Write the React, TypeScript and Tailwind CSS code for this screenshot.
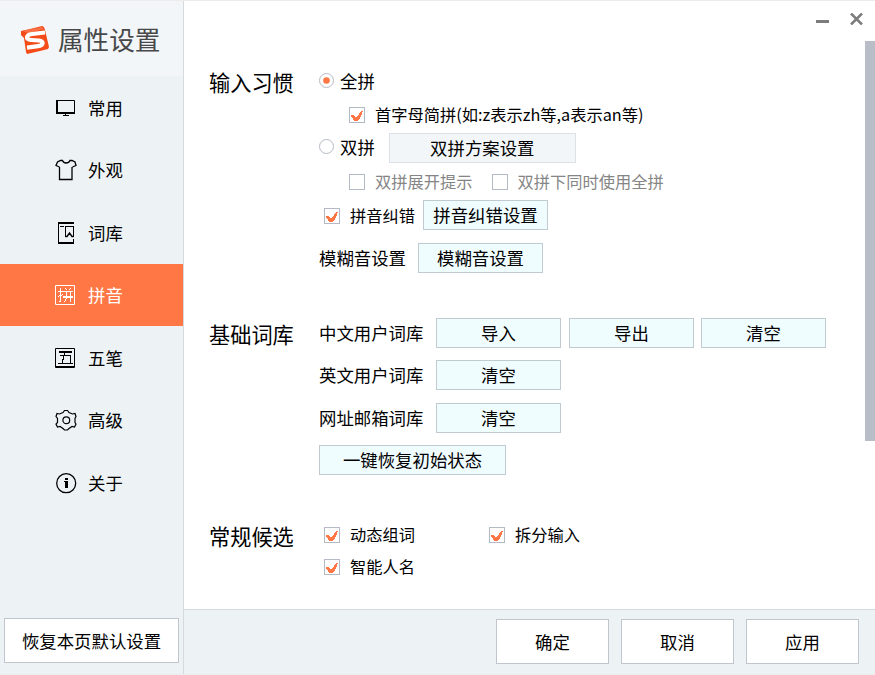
import type { ReactNode } from "react";

function CheckBox({ checked = false }: { checked?: boolean }) {
  return (
    <svg width="16" height="16" viewBox="0 0 16 16" className="mr-px mt-px shrink-0" shapeRendering="crispEdges">
      <rect x="0.5" y="0.5" width="15" height="15" fill="#fff" stroke="#b4bac5" />
      {checked && (
        <path d="M2 8h3v1h1v1h2V9h1V8h1V6h1V5h1V4h2v1h-1v3h-1v2h-1v2h-1v1H9v1H5v-1H4v-2H3v-1H2z" fill="#ff7744" />
      )}
    </svg>
  );
}

function Radio({ checked = false, className = "" }: { checked?: boolean; className?: string }) {
  return (
    <svg width="15" height="15" viewBox="0 0 15 15" className={`shrink-0 ${className}`}>
      <circle cx="7.5" cy="7.5" r="7" fill="#fff" stroke="#b4bac5" />
      {checked && <circle cx="7.5" cy="7.5" r="3.3" fill="#ff7744" />}
    </svg>
  );
}

function Button({ children, className = "" }: { children: ReactNode; className?: string }) {
  return (
    <button
      className={`flex h-[30px] shrink-0 items-center justify-center border border-[#c0cad0] bg-[#f0fdff] text-[17.4px] leading-[30px] ${className}`}
    >
      {children}
    </button>
  );
}

function DialogButton({ children, className = "w-[113px]" }: { children: ReactNode; className?: string }) {
  return (
    <button
      className={`flex h-[45px] shrink-0 items-center justify-center border border-[#c1c6ce] bg-white text-[17.4px] leading-none ${className}`}
    >
      {children}
    </button>
  );
}

function Check({ label, checked, disabled, className = "" }: { label: string; checked?: boolean; disabled?: boolean; className?: string }) {
  return (
    <label className={`flex items-center text-[16.25px] ${disabled ? "text-[#858585]" : ""} ${className}`}>
      <CheckBox checked={checked} />
      <span className="ml-[9px]">{label}</span>
    </label>
  );
}

function Row({ children, className = "" }: { children: ReactNode; className?: string }) {
  return <div className={`flex h-[30px] items-center whitespace-nowrap text-[17.4px] leading-[30px] ${className}`}>{children}</div>;
}

function Section({ title, children, className = "", titleClass = "" }: { title: string; children: ReactNode; className?: string; titleClass?: string }) {
  return (
    <section className={`flex ${className}`}>
      <h2 className={`w-[110px] shrink-0 text-[21.2px] leading-[32px] ${titleClass}`}>{title}</h2>
      <div>{children}</div>
    </section>
  );
}

const icons = {
  monitor: (
    <>
      <path d="M1.500 3.500h18v12h-18z" fill="none" stroke="currentColor" />
      <path d="M1 3h2v13H1zM1 15h19v2H1zM10 17h1v2h-1zM8 18h6v1H8z" fill="currentColor" />
    </>
  ),
  shirt: (
    <path
      d="M4.500 8v12.500h12.500V8M17 8v12M4.500 8L1 6.500 2.500 3l3-1.500h2C8.500 4 10 4 11 4s3 0 4-2.500h2l3 1.500 1 3.500-3.500 1.500"
      fill="none" stroke="currentColor" strokeWidth="1.300"
    />
  ),
  book: (
    <>
      <path d="M3 0h16v2H3zM3 0h1v21H3zM3 20h16v2H3zM18 17h1v4h-1zM5 4h4v1H5zM10 4h9v1h-9zM10 4h1v11h-1zM18 4h1v11h-1z" fill="currentColor" />
      <path d="M10.500 14.500h1.500l2.500-3.500 2.500 3.500h1.500" fill="none" stroke="currentColor" strokeWidth="1.400" />
    </>
  ),
  pinyin: (
    <>
      <path d="M.5 1.500h19v19H.5z" fill="none" stroke="currentColor" />
      <path d="M3 7h5v1H3zM5 4h1v14H5zM4 17h1v1H4zM3 12h1v1H3zM4 11h3v1H4zM7 10h1v1H7zM8 7h10v1H8zM8 12h10v2H8zM11 7h1v8h-1zM10 15h1v2h-1zM9 17h1v1H9zM15 7h1v11h-1zM10 4h1v1h-1zM11 5h1v1h-1zM15 4h1v1h-1zM14 5h1v1h-1z" fill="currentColor" />
    </>
  ),
  wubi: (
    <>
      <path d="M.5 1.500h19v19H.5zM0 19.500h20" fill="none" stroke="currentColor" />
      <path d="M4 4h13v2H4zM9 6h1v3H9zM8 9h1v4H8zM5 8h11v1H5zM7 12h1v4H7zM15 9h1v7h-1zM3 16h15v1H3z" fill="currentColor" />
    </>
  ),
  gear: (
    <>
      <path d="M9.500 1.500h3l1.500 2 3.500 1.500 2.500-.5 1 3-1 2v4l1 1.500-1.500 3-2.500-.5-3 2-1.500 1.500h-3l-1.500-1.500-3-2-2.500.5-1.500-3 1.500-1.500v-4l-1.500-2 1-3 2.500.500 3.500-1.500z" fill="none" stroke="currentColor" strokeWidth="1.200" />
      <circle cx="11.300" cy="11.200" r="3.400" fill="none" stroke="currentColor" strokeWidth="1.200" />
    </>
  ),
  info: (
    <>
      <circle cx="11.200" cy="11.200" r="9.500" fill="none" stroke="currentColor" strokeWidth="1.300" />
      <path d="M10 6h3v2h-3zM9 9h4v1H9zM10 9h3v7h-3z" fill="currentColor" />
    </>
  ),
};

const menu: { label: string; icon: keyof typeof icons; active?: boolean }[] = [
  { label: "常用", icon: "monitor" },
  { label: "外观", icon: "shirt" },
  { label: "词库", icon: "book" },
  { label: "拼音", icon: "pinyin", active: true },
  { label: "五笔", icon: "wubi" },
  { label: "高级", icon: "gear" },
  { label: "关于", icon: "info" },
];

function Logo() {
  return (
    <svg width="30" height="30" viewBox="0 0 30 30" className="mt-[5px] shrink-0">
      <path d="M0 5l9-2 12-3 2 1 1 3 4 17-1 2-8 2-13 3-1-2L3 12 0 9z" fill="#f44b18" />
      <path d="M1 5l20-4 2 2-16 4z" fill="#f87044" />
      <path d="M24 6.500L11 8c-6 .7-7 5.500-1 6l8 .5c5.500.5 4.500 5-1 5.700L6 21.700" fill="none" stroke="#fff" strokeWidth="4.200" />
    </svg>
  );
}

export default function App() {
  return (
    <div className="flex h-[675px] w-[875px] overflow-hidden border-y border-[#ececec] bg-white font-['Noto_Sans_CJK_SC',sans-serif] text-black">
      <aside className="flex w-[184px] shrink-0 flex-col border-r border-[#d5dade] bg-[#edf2f5]">
        <header className="flex h-[75px] shrink-0 items-center bg-[#f2f6f9] pl-[21px]">
          <Logo />
          <h1 className="ml-[7px] whitespace-nowrap text-[25.6px] font-normal leading-[38px] text-[#484848]">属性设置</h1>
        </header>
        <nav className="flex flex-col gap-[0.5px] pt-[0.5px]">
          {menu.map((item) => (
            <a key={item.label} className={`flex h-[62px] items-center pl-[55px] text-[17.4px] ${item.active ? "bg-[#ff7744] text-white" : ""}`}>
              <svg width="22" height="22" viewBox="0 0 22 22">{icons[item.icon]}</svg>
              <span className="ml-[11px] pt-[1px]">{item.label}</span>
            </a>
          ))}
        </nav>
        <div className="mt-auto pb-[11px] pl-1">
          <DialogButton className="w-[175px]">恢复本页默认设置</DialogButton>
        </div>
      </aside>
      <div className="flex flex-1 flex-col">
        <div className="flex h-[608px]">
          <main className="flex-1 pl-[25px] pt-[64px]">
            <Section title="输入习惯" titleClass="mt-px">
              <Row>
                <Radio checked />
                <span className="ml-[6px] mt-px">全拼</span>
              </Row>
              <Row className="mt-1 pl-[30px]">
                <Check checked label="首字母简拼(如:z表示zh等,a表示an等)" />
              </Row>
              <Row className="mt-1">
                <Radio className="mb-[3px]" />
                <span className="mb-[2px] ml-[6px]">双拼</span>
                <Button className="ml-[14px] w-[187px] !border-[#dbe1e6] !bg-[#f2f6f9]">双拼方案设置</Button>
              </Row>
              <Row className="mt-[3px] pl-[30px]">
                <Check disabled label="双拼展开提示" />
                <Check disabled label="双拼下同时使用全拼" className="ml-[19px]" />
              </Row>
              <Row className="mt-1 pl-[5px]">
                <Check checked label="拼音纠错" className="w-[99px]" />
                <Button className="w-[125px]">拼音纠错设置</Button>
              </Row>
              <Row className="mt-[13px]">
                <span className="w-[99px]">模糊音设置</span>
                <Button className="w-[125px]">模糊音设置</Button>
              </Row>
            </Section>
            <Section title="基础词库" className="mt-[45px]">
              <Row>
                <span className="w-[117px]">中文用户词库</span>
                <Button className="w-[125px]">导入</Button>
                <Button className="ml-2 w-[125px]">导出</Button>
                <Button className="ml-[7px] w-[125px]">清空</Button>
              </Row>
              <Row className="mt-3">
                <span className="w-[117px]">英文用户词库</span>
                <Button className="w-[125px]">清空</Button>
              </Row>
              <Row className="mt-[13px]">
                <span className="w-[117px]">网址邮箱词库</span>
                <Button className="w-[125px]">清空</Button>
              </Row>
              <Row className="mt-3">
                <Button className="w-[187px]">一键恢复初始状态</Button>
              </Row>
            </Section>
            <Section title="常规候选" className="mt-11" titleClass="mt-px">
              <Row className="pl-[5px]">
                <Check checked label="动态组词" className="w-[165px]" />
                <Check checked label="拆分输入" />
              </Row>
              <Row className="mt-[2px] pl-[5px]">
                <Check checked label="智能人名" />
              </Row>
            </Section>
          </main>
          <div className="-ml-[59px] flex w-[59px] shrink-0 flex-col items-end">
            <div className="flex h-10 w-full shrink-0 items-start pt-3">
              <span className="mt-[7px] h-[3px] w-[13px] bg-[#7c7c7c]" />
              <svg width="13" height="12" viewBox="0 0 13 12" className="ml-[21px]">
                <path d="M1 .5l11 11M12 .5l-11 11" stroke="#7c7c7c" strokeWidth="2.500" />
              </svg>
            </div>
            <div className="h-[400px] w-[10px] bg-[#b8bdc8]" />
          </div>
        </div>
        <footer className="flex flex-1 justify-end gap-3 border-t border-[#d5dade] bg-[#edf2f5] pr-4 pt-[9px]">
          <DialogButton>确定</DialogButton>
          <DialogButton>取消</DialogButton>
          <DialogButton>应用</DialogButton>
        </footer>
      </div>
    </div>
  );
}
